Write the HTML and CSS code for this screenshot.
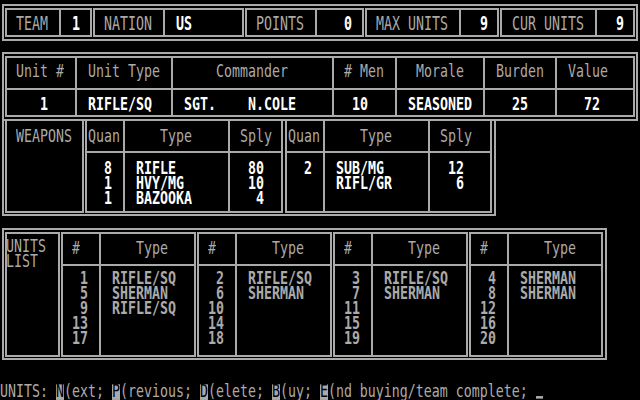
FILE: index.html
```html
<!DOCTYPE html>
<html>
<head>
<meta charset="utf-8">
<title>Units</title>
<link rel="stylesheet" href="styles.css">
</head>
<body>
<div class="screen">
  <div class="frame f-top">
    <div class="box bx1">
      <div class="c pt6 pl9"><div class="ln lg">TEAM</div></div>
      <div class="c pt6 pl11"><div class="ln lg w">1</div></div>
    </div>
    <div class="box bx2">
      <div class="c pt6 pl9"><div class="ln lg">NATION</div></div>
      <div class="c pt6 pl11"><div class="ln lg w">US</div></div>
    </div>
    <div class="box bx3">
      <div class="c pt6 pl9"><div class="ln lg">POINTS</div></div>
      <div class="c pt6 pl27"><div class="ln lg w">0</div></div>
    </div>
    <div class="box bx4">
      <div class="c pt6 pl9"><div class="ln lg">MAX UNITS</div></div>
      <div class="c pt6 pl19"><div class="ln lg w">9</div></div>
    </div>
    <div class="box bx5">
      <div class="c pt6 pl10"><div class="ln lg">CUR UNITS</div></div>
      <div class="c pt6 pl19"><div class="ln lg w">9</div></div>
    </div>
  </div>

  <div class="frame f-unit">
    <div class="box unit-grid">
      <div class="c pt6 pl9"><div class="ln">Unit #</div></div>
      <div class="c pt6 pl11"><div class="ln">Unit Type</div></div>
      <div class="c pt6 pl43"><div class="ln">Commander</div></div>
      <div class="c pt6 pl10"><div class="ln"># Men</div></div>
      <div class="c pt6 pl19"><div class="ln">Morale</div></div>
      <div class="c pt6 pl11"><div class="ln">Burden</div></div>
      <div class="c pt6 pl11"><div class="ln">Value</div></div>
      <div class="c pt7 pl33"><div class="ln w">1</div></div>
      <div class="c pt7 pl11"><div class="ln w">RIFLE/SQ</div></div>
      <div class="c pt7 pl11"><div class="ln w">SGT.    N.COLE</div></div>
      <div class="c pt7 pl18"><div class="ln w">10</div></div>
      <div class="c pt7 pl11"><div class="ln w">SEASONED</div></div>
      <div class="c pt7 pl27"><div class="ln w">25</div></div>
      <div class="c pt7 pl27"><div class="ln w">72</div></div>
    </div>
  </div>

  <div class="f-weap">
    <div class="box wlabel">
      <div class="c pt8 pl9"><div class="ln">WEAPONS</div></div>
    </div>
    <div class="box wbox wb1">
      <div class="c pt8 pl1"><div class="ln">Quan</div></div>
      <div class="c pt8 pl35"><div class="ln">Type</div></div>
      <div class="c pt8 pl10"><div class="ln">Sply</div></div>
      <div class="c pt8 pl17">
        <div class="ln w">8</div>
        <div class="ln w">1</div>
        <div class="ln w">1</div>
      </div>
      <div class="c pt8 pl11">
        <div class="ln w">RIFLE</div>
        <div class="ln w">HVY/MG</div>
        <div class="ln w">BAZOOKA</div>
      </div>
      <div class="c pt8 pl18">
        <div class="ln w">80</div>
        <div class="ln w">10</div>
        <div class="ln w"> 4</div>
      </div>
    </div>
    <div class="box wbox wb2">
      <div class="c pt8 pl1"><div class="ln">Quan</div></div>
      <div class="c pt8 pl35"><div class="ln">Type</div></div>
      <div class="c pt8 pl10"><div class="ln">Sply</div></div>
      <div class="c pt8 pl17">
        <div class="ln w">2</div>
      </div>
      <div class="c pt8 pl11">
        <div class="ln w">SUB/MG</div>
        <div class="ln w">RIFL/GR</div>
      </div>
      <div class="c pt8 pl18">
        <div class="ln w">12</div>
        <div class="ln w"> 6</div>
      </div>
    </div>
  </div>

  <div class="frame f-list">
    <div class="box ulabel">
      <div class="c pt5 ulab">
        <div class="ln">UNITS</div>
        <div class="ln">LIST</div>
      </div>
    </div>
    <div class="box ubox">
      <div class="c pt7 pl9"><div class="ln">#</div></div>
      <div class="c pt7 pl35"><div class="ln">Type</div></div>
      <div class="c pt5 pl9">
        <div class="ln b"> 1</div><div class="ln b"> 5</div><div class="ln b"> 9</div><div class="ln b">13</div><div class="ln b">17</div>
      </div>
      <div class="c pt5 pl11">
        <div class="ln b">RIFLE/SQ</div><div class="ln b">SHERMAN</div><div class="ln b">RIFLE/SQ</div>
      </div>
    </div>
    <div class="box ubox">
      <div class="c pt7 pl9"><div class="ln">#</div></div>
      <div class="c pt7 pl35"><div class="ln">Type</div></div>
      <div class="c pt5 pl9">
        <div class="ln b"> 2</div><div class="ln b"> 6</div><div class="ln b">10</div><div class="ln b">14</div><div class="ln b">18</div>
      </div>
      <div class="c pt5 pl11">
        <div class="ln b">RIFLE/SQ</div><div class="ln b">SHERMAN</div>
      </div>
    </div>
    <div class="box ubox">
      <div class="c pt7 pl9"><div class="ln">#</div></div>
      <div class="c pt7 pl35"><div class="ln">Type</div></div>
      <div class="c pt5 pl9">
        <div class="ln b"> 3</div><div class="ln b"> 7</div><div class="ln b">11</div><div class="ln b">15</div><div class="ln b">19</div>
      </div>
      <div class="c pt5 pl11">
        <div class="ln b">RIFLE/SQ</div><div class="ln b">SHERMAN</div>
      </div>
    </div>
    <div class="box ubox ubox4">
      <div class="c pt7 pl9"><div class="ln">#</div></div>
      <div class="c pt7 pl35"><div class="ln">Type</div></div>
      <div class="c pt5 pl9">
        <div class="ln b"> 4</div><div class="ln b"> 8</div><div class="ln b">12</div><div class="ln b">16</div><div class="ln b">20</div>
      </div>
      <div class="c pt5 pl11">
        <div class="ln b">SHERMAN</div><div class="ln b">SHERMAN</div>
      </div>
    </div>
  </div>

  <div class="cmd"><div class="ln">UNITS: <span class="hk">N</span>(ext; <span class="hk">P</span>(revious; <span class="hk">D</span>(elete; <span class="hk">B</span>(uy; <span class="hk">E</span>(nd buying/team complete; <span class="cur"></span></div></div>
</div>
</body>
</html>
```

FILE: styles.css
```css
html, body {
  margin: 0;
  padding: 0;
  background: #000;
}

body {
  width: 640px;
  height: 400px;
  overflow: hidden;
  font-family: "DejaVu Sans Mono", "Liberation Mono", monospace;
  font-size: 13.29px;
  color: #aaaaaa;
}

.screen {
  display: flow-root;
}

/* double-line outer frames */
.frame {
  box-sizing: border-box;
  border: 2px solid #aaaaaa;
  margin-left: 2px;
}

.f-top {
  width: 636px;
  margin-top: 4px;
  padding: 2px 1px;
  display: flex;
  gap: 1px;
}

.f-unit {
  width: 636px;
  margin-top: 11px;
  padding: 2px 1px;
}

.f-weap {
  box-sizing: border-box;
  width: 494px;
  margin: -2px 0 0 2px;
  border: 2px solid #aaaaaa;
  border-top: 0;
  padding: 0 2px 1px 1px;
  display: flex;
  gap: 1px;
}

.f-list {
  width: 605px;
  margin-top: 12px;
  padding: 2px 2px 1px 1px;
  display: flex;
  gap: 1px;
}

/* single-line boxes: gray background shows through the gaps as lines */
.box {
  display: grid;
  background: #aaaaaa;
  padding: 2px;
  gap: 2px;
}

.c {
  background: #000;
}

.bx1 { grid-template-columns: 52px 29px; grid-template-rows: 25px; }
.bx2 { grid-template-columns: 68px 77px; grid-template-rows: 25px; }
.bx3 { grid-template-columns: 68px 45px; grid-template-rows: 25px; }
.bx4 { grid-template-columns: 92px 36px; grid-template-rows: 25px; }
.bx5 { grid-template-columns: 93px 36px; grid-template-rows: 25px; }

.unit-grid {
  grid-template-columns: 68px 94px 159px 61px 86px 70px 76px;
  grid-template-rows: 30px 25px;
}

.wlabel {
  grid-template-columns: 75px;
  grid-template-rows: 90px;
}

.wbox { grid-template-rows: 30px 58px; }
.wb1 { grid-template-columns: 36px 103px 51px; }
.wb2 { grid-template-columns: 36px 103px 60px; margin-left: 1px; }

.ulabel {
  grid-template-columns: 51px;
  grid-template-rows: 121px;
}

.ulab { text-indent: -1px; }

.ubox { grid-template-columns: 36px 93px; grid-template-rows: 30px 89px; }
.ubox4 { grid-template-columns: 36px 92px; }

/* text lines: tall narrow terminal glyphs */
.ln {
  height: 15px;
  line-height: 15px;
  white-space: pre;
  transform: scaleY(1.3);
}

.lg { transform: scaleY(1.45); }

.w {
  color: #ffffff;
  font-weight: bold;
}

.b { font-weight: bold; }

.cmd {
  margin-top: 24px;
}

.hk {
  display: inline-block;
  width: 8px;
  height: 12px;
  line-height: 12px;
  margin-top: 2px;
  vertical-align: top;
  background: #aaaaaa;
  color: #000;
}

.cur {
  display: inline-block;
  width: 7px;
  height: 2px;
  background: #aaaaaa;
  vertical-align: -1px;
}

/* padding helpers */
.pt5 { padding-top: 5px; }
.pt6 { padding-top: 6px; }
.pt7 { padding-top: 7px; }
.pt8 { padding-top: 8px; }

.pl1 { padding-left: 1px; }
.pl9 { padding-left: 9px; }
.pl10 { padding-left: 10px; }
.pl11 { padding-left: 11px; }
.pl17 { padding-left: 17px; }
.pl18 { padding-left: 18px; }
.pl19 { padding-left: 19px; }
.pl27 { padding-left: 27px; }
.pl33 { padding-left: 33px; }
.pl35 { padding-left: 35px; }
.pl43 { padding-left: 43px; }
```
